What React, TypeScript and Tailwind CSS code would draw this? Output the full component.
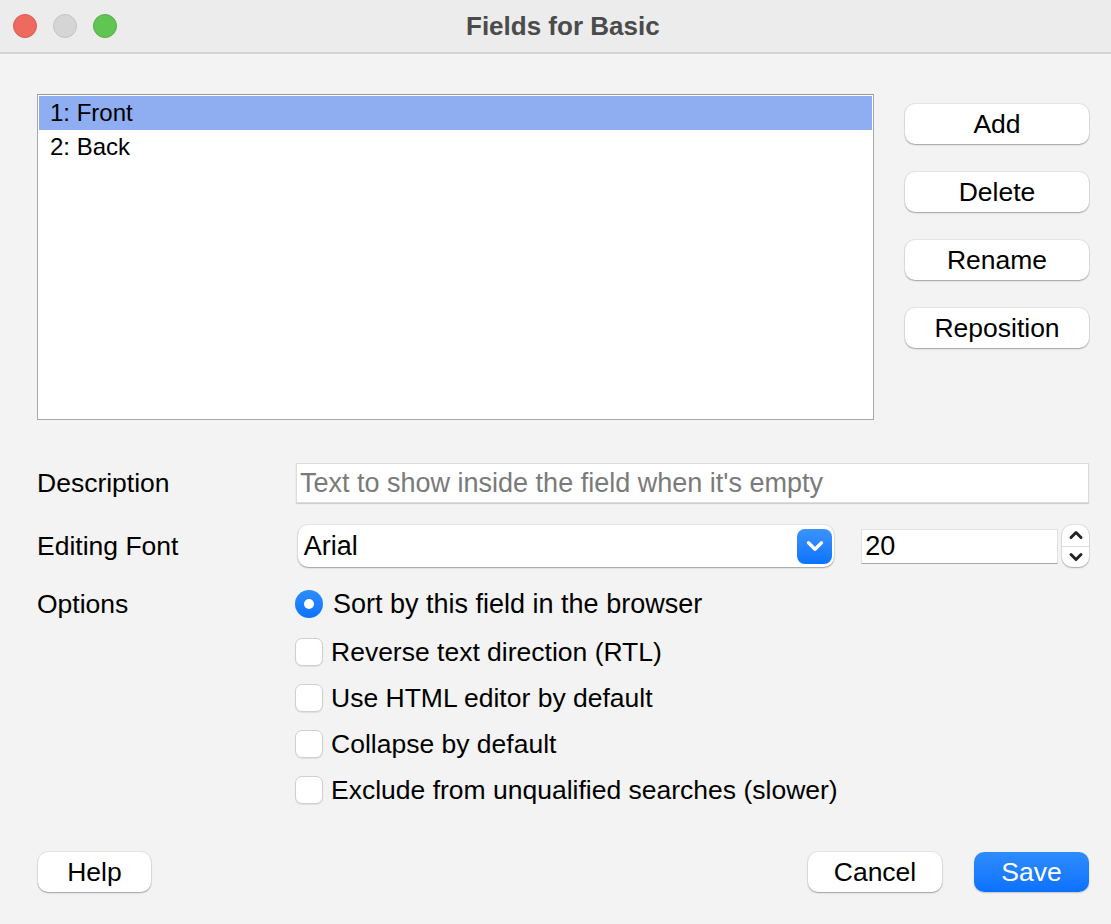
import { ChevronDown, ChevronUp } from "lucide-react";

const font = "font-['Liberation_Sans',Arial,sans-serif]";

const PushButton = ({ label, className = "" }: { label: string; className?: string }) => (
  <button
    className={`h-[40px] rounded-[10px] bg-white text-[26.5px] leading-none text-black shadow-[0_1px_1.5px_rgba(0,0,0,0.3),0_0_0_1px_rgba(0,0,0,0.05)] ${className}`}
  >
    {label}
  </button>
);

const Checkbox = ({ label }: { label: string }) => (
  <div className="flex items-center h-[28px]">
    <div className="w-[28px] h-[28px] rounded-[7px] bg-white border border-[#cfcfcf] shadow-[0_1px_1px_rgba(0,0,0,0.08)]" />
    <span className="ml-[8px] text-[26.5px] leading-none text-black">{label}</span>
  </div>
);

const App = () => {
  const fields = ["1: Front", "2: Back"];
  const actions = ["Add", "Delete", "Rename", "Reposition"];
  const options = [
    "Reverse text direction (RTL)",
    "Use HTML editor by default",
    "Collapse by default",
    "Exclude from unqualified searches (slower)",
  ];

  return (
    <div className={`w-[1111px] h-[924px] bg-[#f3f3f3] flex flex-col ${font}`}>
      {/* Title bar */}
      <div className="h-[54px] shrink-0 flex items-center bg-[#ececec] border-b-2 border-[#d4d4d4]">
        <div className="flex items-center gap-[16px] pl-[13px]">
          <div className="w-[24px] h-[24px] rounded-full bg-[#ee6a5f] border border-[#d95c52]" />
          <div className="w-[24px] h-[24px] rounded-full bg-[#d5d5d5] border border-[#c4c4c4]" />
          <div className="w-[24px] h-[24px] rounded-full bg-[#61c554] border border-[#52ad46]" />
        </div>
        <div className="ml-[349px] text-[26px] font-bold text-[#4b4b4b] leading-none">Fields for Basic</div>
      </div>

      <div className="flex-1 flex flex-col pl-[37px] pr-[22px]">
        {/* Field list + actions */}
        <div className="flex mt-[40px]">
          <div className="w-[837px] h-[326px] bg-white border border-[#a8a8a8] border-t-[#999] p-[1px]">
            {fields.map((f, i) => (
              <div
                key={f}
                className={`h-[34px] flex items-center pl-[11px] text-[24px] leading-none text-black ${
                  i === 0 ? "bg-[#8fadf1]" : ""
                }`}
              >
                {f}
              </div>
            ))}
          </div>
          <div className="ml-[31px] pt-[10px] flex flex-col gap-[28px]">
            {actions.map((a) => (
              <PushButton key={a} label={a} className="w-[184px]" />
            ))}
          </div>
        </div>

        {/* Description */}
        <div className="flex items-center mt-[43px]">
          <div className="w-[259px] text-[26.5px] leading-none text-black">Description</div>
          <div className="w-[793px] h-[40px] bg-white border border-[#dcdcdc] shadow-[0_1px_1px_rgba(0,0,0,0.15)] flex items-center pl-[3px] text-[27px] leading-none text-[#7a7a7a]">
            Text to show inside the field when it's empty
          </div>
        </div>

        {/* Editing font */}
        <div className="flex items-center mt-[22px]">
          <div className="w-[261px] text-[26.5px] leading-none text-black">Editing Font</div>
          <div className="w-[537px] h-[42px] bg-white rounded-[10px] shadow-[0_1px_1.5px_rgba(0,0,0,0.3),0_0_0_1px_rgba(0,0,0,0.05)] flex items-center justify-between pl-[6px] pr-[2px]">
            <span className="text-[27px] leading-none text-black">Arial</span>
            <div className="w-[35px] h-[35px] rounded-[8px] bg-gradient-to-b from-[#3a93fd] to-[#0a72fe] flex items-center justify-center">
              <ChevronDown className="w-[26px] h-[26px] text-white" strokeWidth={3} />
            </div>
          </div>
          <div className="ml-[27px] w-[197px] h-[35px] bg-white border border-[#e2e2e2] border-b-[#a9a9a9] flex items-center pl-[3px] text-[27px] leading-none text-black">
            20
          </div>
          <div className="ml-[4px] w-[27px] h-[42px] bg-white rounded-[10px] shadow-[0_1px_1.5px_rgba(0,0,0,0.25),0_0_0_1px_rgba(0,0,0,0.06)] flex flex-col overflow-hidden">
            <div className="flex-1 flex items-center justify-center border-b border-[#dcdcdc]">
              <ChevronUp className="w-[20px] h-[20px] shrink-0 text-[#222]" strokeWidth={3.5} />
            </div>
            <div className="flex-1 flex items-center justify-center">
              <ChevronDown className="w-[20px] h-[20px] shrink-0 text-[#222]" strokeWidth={3.5} />
            </div>
          </div>
        </div>

        {/* Options */}
        <div className="flex mt-[23px]">
          <div className="w-[258px] h-[28px] flex items-center text-[26.5px] leading-none text-black">Options</div>
          <div className="flex flex-col">
            <div className="flex items-center h-[28px]">
              <div className="w-[28px] h-[28px] rounded-full bg-gradient-to-b from-[#2d8cfd] to-[#0a74fe] flex items-center justify-center">
                <div className="w-[10px] h-[10px] rounded-full bg-white" />
              </div>
              <span className="ml-[10px] text-[27px] leading-none text-black">Sort by this field in the browser</span>
            </div>
            <div className="flex flex-col gap-[18px] mt-[20px]">
              {options.map((o) => (
                <Checkbox key={o} label={o} />
              ))}
            </div>
          </div>
        </div>

        {/* Footer buttons */}
        <div className="flex items-center mt-[48px] pl-[1px]">
          <PushButton label="Help" className="w-[113px]" />
          <PushButton label="Cancel" className="ml-auto w-[134px]" />
          <button className="ml-[32px] w-[115px] h-[40px] rounded-[10px] bg-gradient-to-b from-[#2f8cfd] to-[#0a71fe] text-white text-[26.5px] leading-none shadow-[0_1px_1.5px_rgba(0,0,0,0.2)]">
            Save
          </button>
        </div>
      </div>
    </div>
  );
};

export default App;
